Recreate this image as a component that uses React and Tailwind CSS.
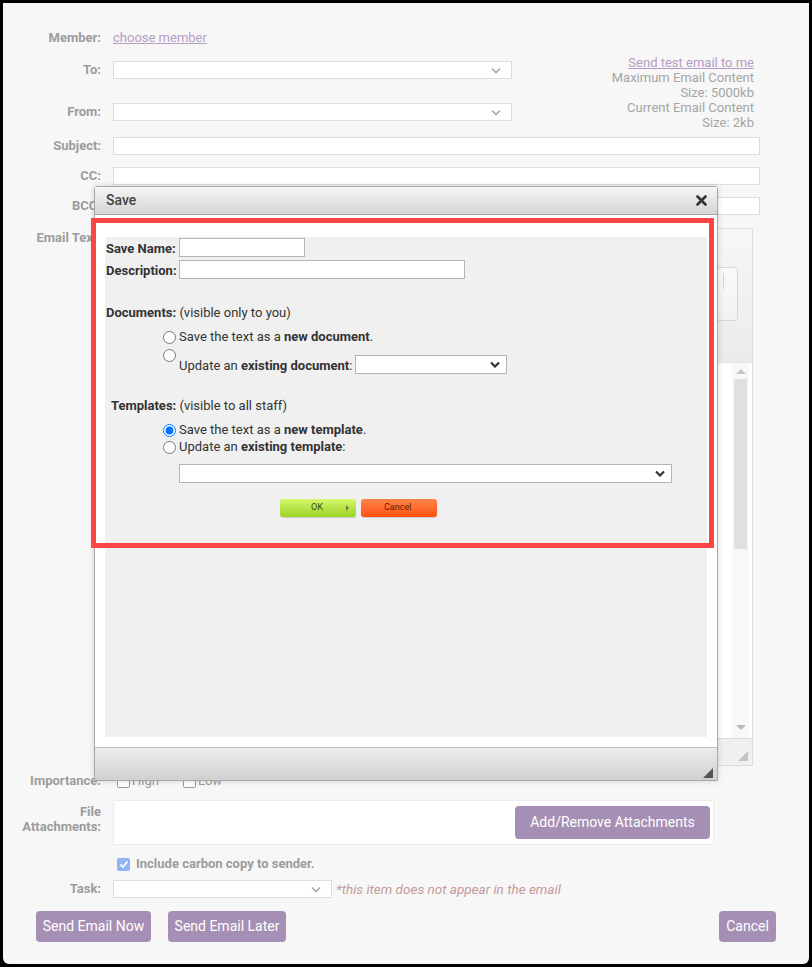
import React from 'react';

const Chevron = ({ dark }) => (
    <svg width="10" height="7" viewBox="0 0 10 7" className="shrink-0">
        <path d="M1 1.5 L5 5.5 L9 1.5" fill="none" stroke={dark ? '#333' : '#aaa'} strokeWidth={dark ? 2.2 : 1.6} />
    </svg>
);

const FakeSelect = ({ className, dark }) => (
    <div className={`flex items-center justify-end bg-white pr-[6px] ${dark ? 'border border-[#b5b5b5]' : 'border border-[#dedede] pr-[10px]'} ${className}`}>
        <Chevron dark={dark} />
    </div>
);

const Label = ({ children, className = '' }) => (
    <div className={`w-[110px] shrink-0 pr-[12px] text-right text-[13px] font-bold text-[#9c9c9c] ${className}`}>{children}</div>
);

const Box = ({ checked }) => (
    checked ? (
        <div className="flex h-[13px] w-[13px] items-center justify-center rounded-[2px] bg-[#8db6f2]">
            <svg width="10" height="9" viewBox="0 0 10 9"><path d="M1.5 4.5 L4 7 L8.5 1.5" fill="none" stroke="#fff" strokeWidth="1.8" /></svg>
        </div>
    ) : (
        <div className="h-[13px] w-[13px] rounded-[2px] border border-[#9c9c9c] bg-white" />
    )
);

function Editor() {
    return (
        <div className="flex h-[538px] w-[640px] flex-col border border-[#dcdcdc] bg-[#f4f4f4]">
            <div className="flex h-[134px] justify-end border-b border-[#e2e2e2] bg-gradient-to-b from-[#f7f7f7] to-[#ebebeb] pr-[14px] pt-[38px]">
                <div className="flex h-[54px] w-[140px] justify-end rounded-[4px] border border-[#d6d6d6] bg-gradient-to-b from-[#fafafa] to-[#f2f2f2] pr-[13px] pt-[5px]">
                    <div className="h-[16px] w-px bg-[#d0d0d0]" />
                </div>
            </div>
            <div className="flex flex-1 bg-white">
                <div className="flex-1" />
                <div className="mr-[3px] flex w-[17px] flex-col items-center bg-[#f8f8f8]">
                    <div className="mt-[6px] h-0 w-0 border-x-[5px] border-b-[5px] border-x-transparent border-b-[#c8c8c8]" />
                    <div className="mt-[5px] h-[170px] w-[13px] bg-[#e0e0e0]" />
                    <div className="flex-1" />
                    <div className="mb-[8px] h-0 w-0 border-x-[5px] border-t-[5px] border-x-transparent border-t-[#b8b8b8]" />
                </div>
            </div>
            <div className="flex h-[27px] items-end justify-end border-t border-[#dcdcdc] bg-[#f0f0f0] pb-[4px] pr-[4px]">
                <div className="h-0 w-0 border-b-[10px] border-l-[10px] border-b-[#c4c4c4] border-l-transparent" />
            </div>
        </div>
    );
}

function SaveModal() {
    return (
        <div className="absolute left-[94px] top-[186px] flex h-[595px] w-[624px] flex-col rounded-t-[3px] border border-[#a8a8a8] bg-white text-[13px] text-[#333] shadow-[0_0_6px_rgba(0,0,0,0.15)]">
            <div className="flex h-[28px] items-center justify-between border-b border-[#a2a2a2] bg-gradient-to-b from-[#f6f6f6] to-[#d5d5d5] pl-[11px] pr-[10px]">
                <span className="text-[14px] font-medium text-[#444]">Save</span>
                <svg width="11" height="11" viewBox="0 0 11 11">
                    <path d="M1.5 1.5 L9.5 9.5 M9.5 1.5 L1.5 9.5" stroke="#333" strokeWidth="2.6" strokeLinecap="round" />
                </svg>
            </div>
            <div className="flex flex-1 flex-col px-[10px] pb-[10px] pt-[22px]">
                <div className="flex flex-1 flex-col bg-[#f0f0f0]">
                    <div className="mt-[1px] flex h-[19px] items-center">
                        <div className="w-[74px] whitespace-nowrap pl-[1px] pt-[2px] font-bold">Save Name:</div>
                        <div className="h-[19px] w-[126px] border border-[#b5b5b5] bg-white" />
                    </div>
                    <div className="mt-[3px] flex h-[19px] items-center">
                        <div className="w-[74px] whitespace-nowrap pl-[1px] pt-[2px] font-bold">Description:</div>
                        <div className="h-[19px] w-[286px] border border-[#b5b5b5] bg-white" />
                    </div>
                    <div className="mt-[26px] h-[16px] pl-[1px] leading-[16px]">
                        <b>Documents:</b> (visible only to you)
                    </div>
                    <label className="ml-[58px] mt-[8px] flex h-[16px] items-center gap-[3px]">
                        <input type="radio" name="doc" className="m-0 h-[13px] w-[13px]" />
                        <span>Save the text as a <b>new document</b>.</span>
                    </label>
                    <div className="ml-[58px] flex h-[30px] items-start gap-[3px]">
                        <input type="radio" name="doc" className="m-0 mt-[4px] h-[13px] w-[13px]" />
                        <div className="flex items-center self-end">
                            <span className="pt-[1px]">Update an <b>existing document</b>:</span>
                            <FakeSelect dark className="ml-[3px] h-[19px] w-[152px]" />
                        </div>
                    </div>
                    <div className="mt-[23px] h-[16px] pl-[6px] leading-[16px]">
                        <b>Templates:</b> (visible to all staff)
                    </div>
                    <label className="ml-[58px] mt-[8px] flex h-[16px] items-center gap-[3px]">
                        <input type="radio" name="tpl" defaultChecked className="m-0 h-[13px] w-[13px]" />
                        <span>Save the text as a <b>new template</b>.</span>
                    </label>
                    <label className="ml-[58px] mt-[1px] flex h-[16px] items-center gap-[3px]">
                        <input type="radio" name="tpl" className="m-0 h-[13px] w-[13px]" />
                        <span>Update an <b>existing template</b>:</span>
                    </label>
                    <FakeSelect dark className="ml-[74px] mt-[9px] h-[19px] w-[493px]" />
                    <div className="ml-[175px] mt-[16px] flex gap-[5px] text-[9px]">
                        <button className="flex h-[18px] w-[76px] items-center justify-between rounded-[3px] bg-gradient-to-b from-[#d6f76a] to-[#9cd21c] pl-[31px] pr-[7px] text-[#3a4a10] shadow-[0_1px_1px_rgba(0,0,0,0.15)]">
                            <span>OK</span>
                            <span className="h-0 w-0 border-y-[3px] border-l-[3px] border-y-transparent border-l-[#6b7f2a]" />
                        </button>
                        <button className="flex h-[18px] w-[76px] items-center justify-between rounded-[3px] bg-gradient-to-b from-[#ff8446] to-[#ff4f05] pl-[23px] pr-[7px] text-[#5a1c00] shadow-[0_1px_1px_rgba(0,0,0,0.15)]">
                            <span>Cancel</span>
                            <span className="text-[10px] text-[#e07040]">×</span>
                        </button>
                    </div>
                </div>
            </div>
            <div className="flex h-[33px] items-end justify-end border-t border-[#bdbdbd] bg-gradient-to-b from-[#ececec] to-[#d0d0d0] pb-[2px] pr-[4px]">
                <div className="h-0 w-0 border-b-[10px] border-l-[10px] border-b-[#555] border-l-transparent" />
            </div>
        </div>
    );
}

export default function App() {
    return (
        <div className="relative h-[967px] w-[812px] overflow-hidden bg-black p-[3px] font-['Roboto',sans-serif]">
            <div className="flex h-full flex-col rounded-b-[6px] bg-[#f7f7f7] pr-[33px]">
                <div className="flex flex-col pr-[16px]">
                    {/* member */}
                    <div className="mt-[27px] flex h-[16px] items-center">
                        <Label>Member:</Label>
                        <span className="text-[13px] text-[#b39ec6] underline">choose member</span>
                    </div>

                    {/* to / from + size info */}
                    <div className="mt-[9px] flex">
                        <div className="flex flex-col">
                            <div className="mt-[6px] flex h-[18px] items-center">
                                <Label>To:</Label>
                                <FakeSelect className="h-[18px] w-[399px]" />
                            </div>
                            <div className="mt-[24px] flex h-[18px] items-center">
                                <Label>From:</Label>
                                <FakeSelect className="h-[18px] w-[399px]" />
                            </div>
                        </div>
                        <div className="ml-auto pr-[6px] text-right text-[13px] leading-[15px] text-[#a5a5a5]">
                            <div className="text-[#b39ec6] underline">Send test email to me</div>
                            <div>Maximum Email Content</div>
                            <div>Size: 5000kb</div>
                            <div>Current Email Content</div>
                            <div>Size: 2kb</div>
                        </div>
                    </div>

                    <div className="mt-[7px] flex h-[18px] items-center">
                        <Label>Subject:</Label>
                        <div className="h-[18px] flex-1 border border-[#dedede] bg-white" />
                    </div>
                    <div className="mt-[12px] flex h-[18px] items-center">
                        <Label>CC:</Label>
                        <div className="h-[18px] flex-1 border border-[#dedede] bg-white" />
                    </div>
                    <div className="mt-[12px] flex h-[18px] items-center">
                        <Label>BCC:</Label>
                        <div className="h-[18px] flex-1 border border-[#dedede] bg-white" />
                    </div>

                    <div className="mt-[13px] flex">
                        <Label className="pt-[2px] leading-[16px]">Email Text:</Label>
                        <Editor />
                    </div>

                    <div className="mt-[7px] flex h-[16px] items-center text-[13px] text-[#9c9c9c]">
                        <Label>Importance:</Label>
                        <div className="ml-[4px] flex items-center gap-[2px]"><Box /> High</div>
                        <div className="ml-[24px] flex items-center gap-[2px]"><Box /> Low</div>
                    </div>

                    <div className="mt-[11px] flex">
                        <Label className="pt-[4px] leading-[15px]">File<br />Attachments:</Label>
                        <div className="flex h-[45px] w-[601px] items-center justify-end border border-[#ececec] bg-white pr-[3px]">
                            <button className="h-[33px] w-[195px] rounded-[4px] bg-[#a68fb4] text-[14px] text-white">Add/Remove Attachments</button>
                        </div>
                    </div>

                    <div className="mt-[12px] flex h-[14px] items-center">
                        <div className="w-[114px] shrink-0" />
                        <Box checked />
                        <span className="ml-[6px] text-[13px] font-bold text-[#9c9c9c]">Include carbon copy to sender.</span>
                    </div>

                    <div className="mt-[9px] flex h-[18px] items-center">
                        <Label>Task:</Label>
                        <FakeSelect className="h-[18px] w-[219px]" />
                        <span className="ml-[4px] text-[13.5px] italic text-[#c49a9a]">*this item does not appear in the email</span>
                    </div>
                </div>

                <div className="ml-[33px] mt-[13px] flex h-[31px] items-center">
                    <button className="h-[31px] w-[115px] rounded-[4px] bg-[#a68fb4] text-[14px] text-white">Send Email Now</button>
                    <button className="ml-[17px] h-[31px] w-[118px] rounded-[4px] bg-[#a68fb4] text-[14px] text-white">Send Email Later</button>
                    <button className="ml-auto h-[31px] w-[57px] rounded-[4px] bg-[#a68fb4] text-[14px] text-white">Cancel</button>
                </div>
            </div>

            <SaveModal />

            {/* highlight annotation */}
            <div className="pointer-events-none absolute left-[91px] top-[218px] h-[330px] w-[623px] border-[5px] border-[#fe4545]" />
        </div>
    );
}
